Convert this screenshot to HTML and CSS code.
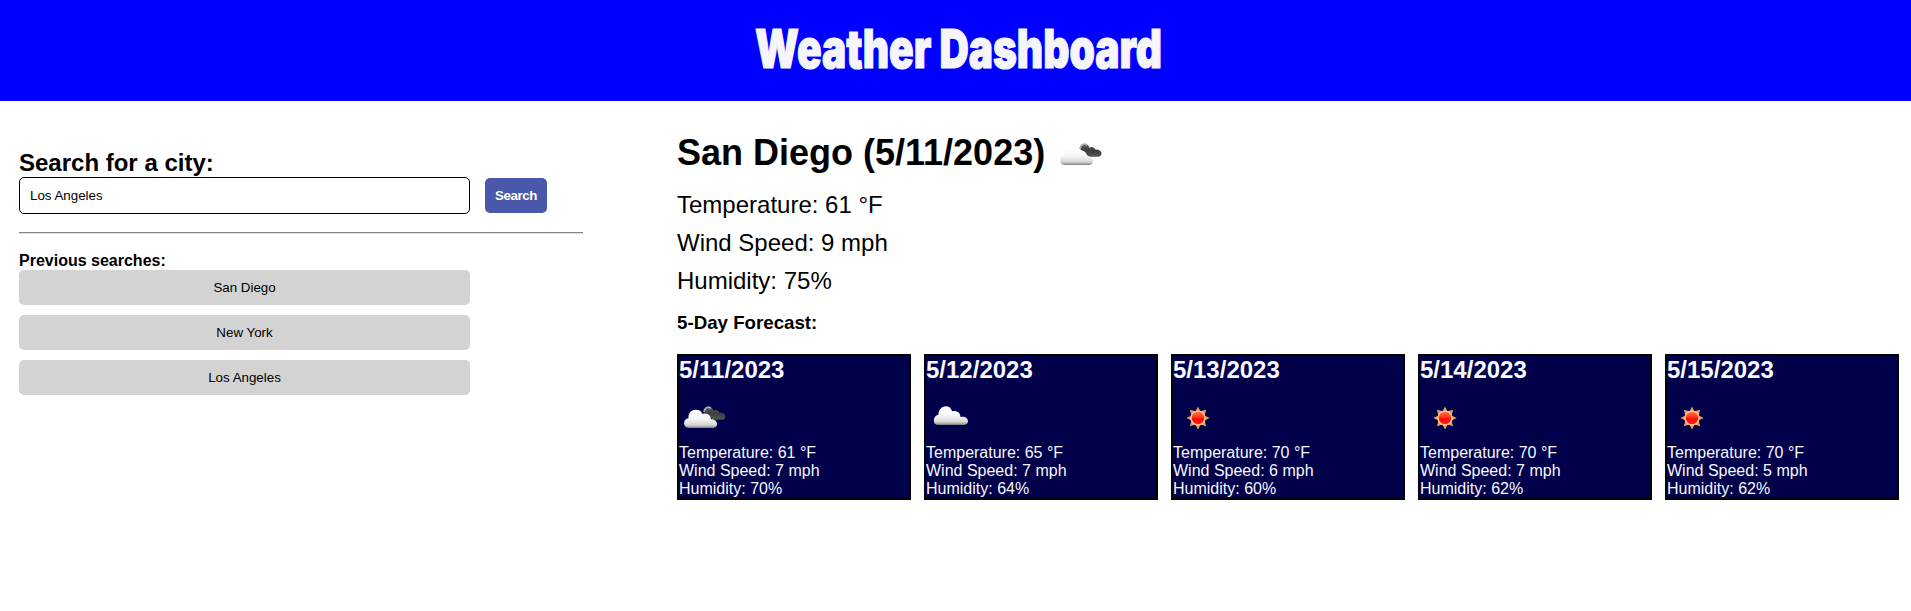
FILE: index.html
```
<!DOCTYPE html>
<html lang="en">
<head>
<meta charset="utf-8">
<title>Weather Dashboard</title>
<link rel="stylesheet" href="styles.css">
</head>
<body>
<svg class="defs" aria-hidden="true">
  <defs>
    <linearGradient id="cloud" x1="0" y1="0" x2="0" y2="1">
      <stop offset="0" stop-color="#fff"/><stop offset=".5" stop-color="#f6f6f6"/><stop offset=".82" stop-color="#d8d8d8"/><stop offset=".93" stop-color="#aaa"/><stop offset="1" stop-color="#777"/>
    </linearGradient>
    <linearGradient id="dark" x1="0" y1="0" x2="0" y2="1">
      <stop offset="0" stop-color="#606060"/><stop offset=".5" stop-color="#3c3c3c"/><stop offset="1" stop-color="#555"/>
    </linearGradient>
    <linearGradient id="core" x1="0" y1="0" x2="0" y2="1">
      <stop offset="0" stop-color="#ff7040"/><stop offset=".5" stop-color="#fc3010"/><stop offset=".55" stop-color="#f80808"/><stop offset="1" stop-color="#ff2010"/>
    </linearGradient>
    <symbol id="broken" viewBox="0 0 50 50">
      <path fill="url(#dark)" d="M25 20C25 16.500 28 14.500 31.200 15.300C33 15.700 34 17.200 34.400 18.700C36.500 17.200 39.500 18 40.300 20.500C43.500 20.500 46.500 22 46.500 24.300C46.500 26.500 45 27.800 43 27.800H34Z"/>
      <path fill="none" stroke="#aaa" stroke-width="1.600" d="M25 20C25.500 15.500 30 13.600 32 16.500"/>
      <path fill="url(#cloud)" d="M9.500 36C6.700 36 5 33.900 5 31.300C5 28.500 7 26.500 9.500 26.200C9 21 12.500 17.800 17 17.800C20.300 17.800 22.500 19.300 23.500 22C27.500 20.500 31.500 22.600 32 27.300C35.500 27.300 38 29 38 32C38 34.500 36.200 36 33.500 36Z"/>
    </symbol>
    <symbol id="scattered" viewBox="0 0 50 50">
      <path fill="url(#cloud)" d="M12 33C9.500 33 7.800 31 7.800 28.500C7.800 25.500 9.500 23.500 12.500 22.500C12.500 18 15.500 14.300 19.500 14.300C23 14.300 25.200 16.300 26.200 19.200C31 18.200 34.200 20.500 34.600 25C38.500 23.700 42 26 42 29.300C42 31.700 40.200 33 37.500 33Z"/>
    </symbol>
    <symbol id="clear" viewBox="0 0 50 50">
      <path fill="#e8a060" d="M25 14.500L27.300 19.200L33.200 17.800L31.500 23.500L36.700 26L31.500 28.500L33.200 34.200L27.500 32.400L25 37.800L22.500 32.400L16.800 34.200L18.500 28.500L13.300 26L18.500 23.500L16.800 17.800L22.700 19.200Z"/>
      <circle cx="25" cy="26" r="7.600" fill="#ffc890"/>
      <circle cx="25" cy="26" r="6.200" fill="url(#core)"/>
    </symbol>
  </defs>
</svg>
<header class="header"><h1 class="title">Weather Dashboard</h1></header>
<main class="layout">
  <aside class="sidebar">
    <h2 class="search-title">Search for a city:</h2>
    <form class="search">
      <input class="search-input" type="text" value="Los Angeles">
      <button class="search-button" type="button">Search</button>
    </form>
    <hr class="divider">
    <h4 class="previous-title">Previous searches:</h4>
    <div class="history">
      <button class="history-item">San Diego</button>
      <button class="history-item">New York</button>
      <button class="history-item">Los Angeles</button>
    </div>
  </aside>
  <section class="weather">
    <div class="current-head"><h2 class="current-title">San Diego (5/11/2023)</h2><svg class="icon"><use href="#broken"/></svg></div>
    <div class="current">
      <p>Temperature: 61 °F</p>
      <p>Wind Speed: 9 mph</p>
      <p>Humidity: 75%</p>
    </div>
    <h3 class="forecast-title">5-Day Forecast:</h3>
    <div class="forecast">
      <article class="card"><h2>5/11/2023</h2><svg class="icon"><use href="#broken"/></svg><p>Temperature: 61 °F</p><p>Wind Speed: 7 mph</p><p>Humidity: 70%</p></article>
      <article class="card"><h2>5/12/2023</h2><svg class="icon"><use href="#scattered"/></svg><p>Temperature: 65 °F</p><p>Wind Speed: 7 mph</p><p>Humidity: 64%</p></article>
      <article class="card"><h2>5/13/2023</h2><svg class="icon"><use href="#clear"/></svg><p>Temperature: 70 °F</p><p>Wind Speed: 6 mph</p><p>Humidity: 60%</p></article>
      <article class="card"><h2>5/14/2023</h2><svg class="icon"><use href="#clear"/></svg><p>Temperature: 70 °F</p><p>Wind Speed: 7 mph</p><p>Humidity: 62%</p></article>
      <article class="card"><h2>5/15/2023</h2><svg class="icon"><use href="#clear"/></svg><p>Temperature: 70 °F</p><p>Wind Speed: 5 mph</p><p>Humidity: 62%</p></article>
    </div>
  </section>
</main>
</body>
</html>
```
FILE: styles.css
```
* { box-sizing: border-box; }
body { margin: 0; background: #fff; color: #000; font-family: "Liberation Sans", Arial, sans-serif; font-size: 16px; }
h1, h2, h3, h4, p { margin: 0; }
.defs { display: block; width: 0; height: 0; }
.header { height: 101px; background: #00f; display: flex; align-items: center; justify-content: center; padding: 0 0 3px 6px; }
.title { font-family: Impact, Inter, sans-serif; font-weight: 900; font-size: 54px; line-height: 60px; color: #f5f5fa; white-space: nowrap; transform: scaleX(.752); -webkit-text-stroke: 1.200px #f5f5fa; }
.layout { display: flex; }
.sidebar { width: 583px; padding: 48px 0 0 19px; }
.search-title { font-size: 24px; line-height: 28px; }
.search { display: flex; align-items: center; gap: 15px; height: 37px; }
.search-input { width: 451px; height: 37px; padding: 0 10px 1px; border: 1px solid #000; border-radius: 5px; background: #fff; color: #000; font: 13.333px "Liberation Sans", Arial, sans-serif; }
.search-button { width: 62px; height: 35px; padding: 0; border: 0; border-radius: 5px; background: #4a58ab; color: #fff; font: bold 13.333px "Liberation Sans", Arial, sans-serif; letter-spacing: -.4px; }
.divider { height: 2px; margin: 18px 0; border: 0; border-top: 1px solid #868686; border-bottom: 1px solid #ddd; }
.previous-title { font-size: 16px; line-height: 18px; }
.history { display: flex; flex-direction: column; gap: 10px; width: 451px; }
.history-item { height: 35px; border: 0; border-radius: 5px; background: #d3d3d3; color: #000; font: 13.333px "Liberation Sans", Arial, sans-serif; }
.weather { margin-left: 94px; padding-top: 28px; }
.icon { display: block; width: 50px; height: 50px; }
.current-head { display: flex; gap: 10px; height: 50px; }
.current-title { font-size: 36px; line-height: 47px; }
.current { padding-top: 7px; font-size: 24px; line-height: 38px; }
.forecast-title { font-size: 18.720px; line-height: 22px; margin-top: 12px; }
.forecast { display: flex; gap: 13px; margin-top: 20px; }
.card { width: 234px; height: 146px; padding: 0; border: 2px solid #000; background: #00004b; color: #f8f8ff; line-height: 18px; }
.card h2 { font-size: 24px; line-height: 28px; }
.card .icon { margin: 8px 0 2px; }
```
